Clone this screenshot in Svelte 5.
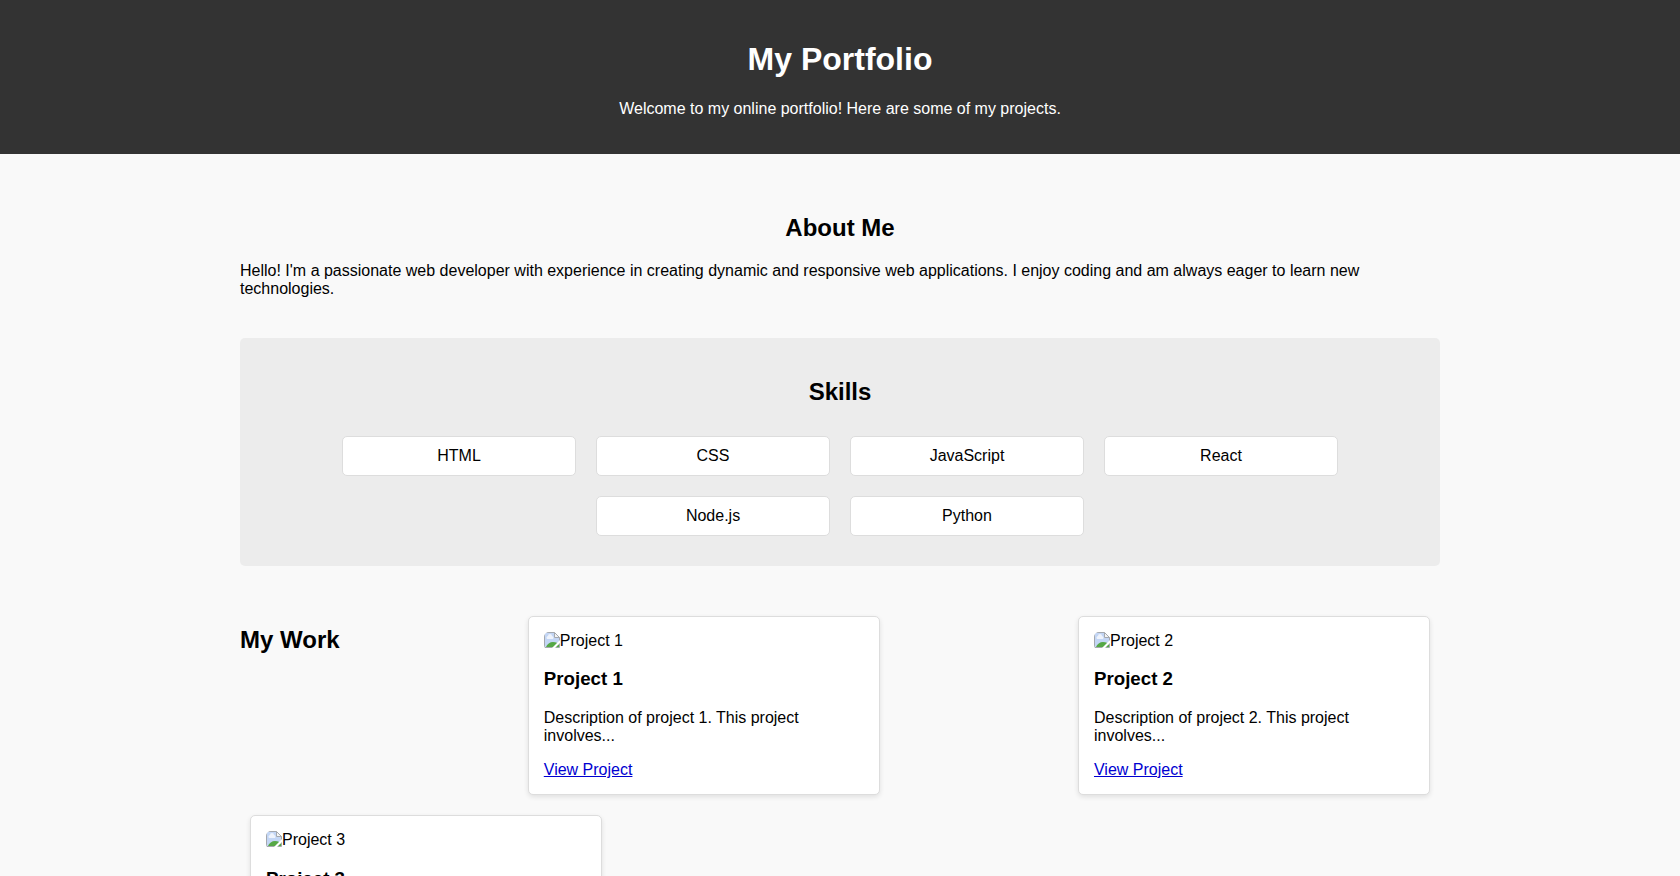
<script lang="ts">
	const skills = ['HTML', 'CSS', 'JavaScript', 'React', 'Node.js', 'Python'];
	const projects = [1, 2, 3];
</script>

<header>
	<h1>My Portfolio</h1>
	<p>Welcome to my online portfolio! Here are some of my projects.</p>
</header>

<main>
	<section>
		<h2>About Me</h2>
		<p>
			Hello! I'm a passionate web developer with experience in creating dynamic and responsive web
			applications. I enjoy coding and am always eager to learn new technologies.
		</p>
	</section>

	<section class="skills">
		<h2>Skills</h2>
		<ul>
			{#each skills as skill}
				<li>{skill}</li>
			{/each}
		</ul>
	</section>

	<section class="work">
		<h2>My Work</h2>
		{#each projects as n}
			<article>
				<div class="image">
					<svg width="16" height="16" viewBox="0 0 16 16" aria-hidden="true">
						<path d="M1 1h10l4 4v10H1z" fill="#c3d6f5" />
						<path d="M3 7a2 2 0 0 1 1-3 2 2 0 0 1 4 0 2 2 0 0 1 1 3z" fill="#eef3fc" />
						<path d="M2 15c1-3 4-5 7-5 3 0 5 1 6 3v2z" fill="#56a846" />
						<path d="M.5.5h10l5 5v10H.5z" fill="none" stroke="#a4a8ae" />
						<path d="M16 8v3l-5 5H8z" fill="#fff" />
						<path d="M10.500.5v5h5z" fill="#f4f4f4" stroke="#a4a8ae" />
					</svg>
					<span>Project {n}</span>
				</div>
				<h3>Project {n}</h3>
				<p>Description of project {n}. This project involves...</p>
				<a href="#project-{n}">View Project</a>
			</article>
		{/each}
	</section>
</main>

<style>
	:global(body) {
		margin: 0;
		background: #f9f9f9;
		font-family: 'Liberation Sans', Arial, sans-serif;
	}

	header {
		background: #333;
		color: #fff;
		padding: 20px;
		text-align: center;
	}

	main {
		max-width: 1200px;
		margin: 0 auto;
		padding: 20px;
	}

	section {
		margin: 40px 0;
	}

	h2 {
		text-align: center;
	}

	.skills {
		background: #ececec;
		border-radius: 5px;
		padding: 20px;
	}

	ul {
		display: flex;
		flex-wrap: wrap;
		justify-content: center;
		list-style: none;
		margin: 0;
		padding: 0;
	}

	li {
		box-sizing: border-box;
		width: 234px;
		margin: 10px;
		padding: 10px;
		background: #fff;
		border: 1px solid #ddd;
		border-radius: 5px;
		text-align: center;
	}

	.work {
		display: flex;
		flex-wrap: wrap;
		justify-content: space-between;
	}

	article {
		box-sizing: border-box;
		width: 352px;
		margin: 10px;
		padding: 15px;
		background: #fff;
		border: 1px solid #ddd;
		border-radius: 5px;
		box-shadow: 0 2px 5px rgba(0, 0, 0, 0.1);
	}

	.image {
		display: flex;
		border-radius: 5px;
		overflow: hidden;
	}

	a {
		color: #0000d0;
	}
</style>
